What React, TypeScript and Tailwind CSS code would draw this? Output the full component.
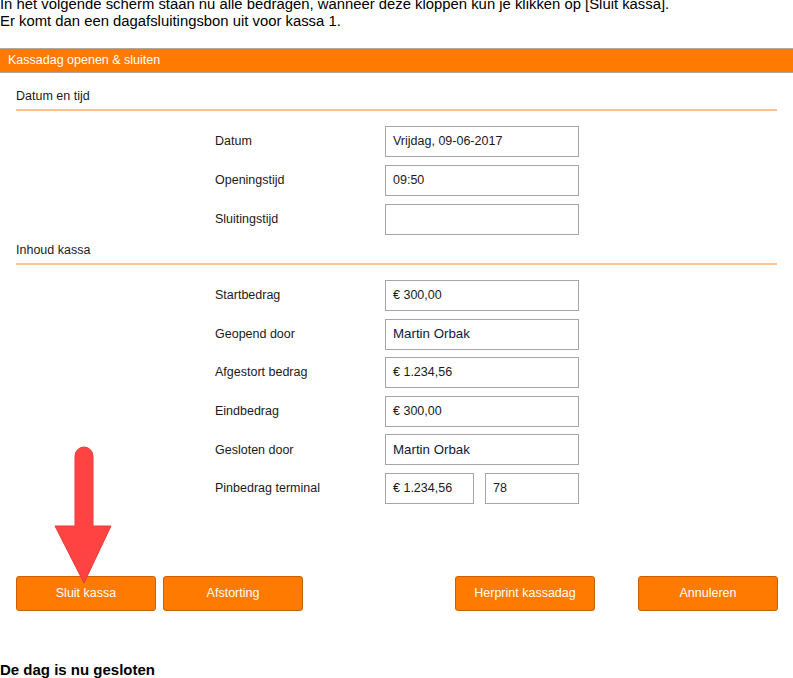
const labelRows1 = [
  { label: "Datum", value: "Vrijdag, 09-06-2017" },
  { label: "Openingstijd", value: "09:50" },
  { label: "Sluitingstijd", value: "" },
];

type Row = { label: string; value: string; name?: boolean; extra?: string };

const labelRows2: Row[] = [
  { label: "Startbedrag", value: "€ 300,00" },
  { label: "Geopend door", value: "Martin Orbak", name: true },
  { label: "Afgestort bedrag", value: "€ 1.234,56" },
  { label: "Eindbedrag", value: "€ 300,00" },
  { label: "Gesloten door", value: "Martin Orbak", name: true },
  { label: "Pinbedrag terminal", value: "€ 1.234,56", extra: "78" },
];

function Field({ value, name, className }: { value: string; name?: boolean; className: string }) {
  return (
    <div
      className={`flex h-[31px] items-center border border-[#a6a6a6] bg-white px-[7px] ${className} ${
        name ? "text-[13.3px] text-[#101a3a]" : "text-[12.5px] text-[#1a1a1a]"
      }`}
    >
      {value}
    </div>
  );
}

function FormRow({ row }: { row: Row }) {
  return (
    <div className="flex h-[31px] items-center">
      <div className="w-[170px] pl-[215px] box-content text-[12.5px] text-[#1a1a1a]">{row.label}</div>
      {row.extra !== undefined ? (
        <div className="flex gap-[11px]">
          <Field value={row.value} className="w-[89px]" />
          <Field value={row.extra} className="w-[94px]" />
        </div>
      ) : (
        <Field value={row.value} name={row.name} className="w-[194px]" />
      )}
    </div>
  );
}

function Section({ title }: { title: string }) {
  return (
    <div className="mx-4">
      <div className="text-[12.5px] leading-[15px] text-[#1a1a1a]">{title}</div>
      <div className="mt-[5px] h-[2px] bg-[#ffc38f]" />
    </div>
  );
}

function OrangeButton({ label, className }: { label: string; className?: string }) {
  return (
    <button
      className={`flex h-[35px] w-[140px] items-center justify-center rounded-[3px] border border-[#c96000] bg-[#ff7a00] text-[12.5px] text-white ${className ?? ""}`}
    >
      {label}
    </button>
  );
}

export default function App() {
  return (
    <div className="relative h-[678px] w-[793px] overflow-hidden bg-white font-['Liberation_Sans',Arial,sans-serif]">
      {/* uitleg boven */}
      <div className="mt-[-4px] text-[14.85px] leading-[17px] text-black">
        <p>In het volgende scherm staan nu alle bedragen, wanneer deze kloppen kun je klikken op [Sluit kassa].</p>
        <p>Er komt dan een dagafsluitingsbon uit voor kassa 1.</p>
      </div>

      <div className="mt-[18px] w-[793px]">
        <div className="flex h-[25px] items-center border-y border-[#b0a8a0] bg-[#ff7a00] pl-2 text-[12.5px] text-white">
          Kassadag openen &amp; sluiten
        </div>

        <div className="mt-[16px]">
          <Section title="Datum en tijd" />
          <div className="mt-[15px] flex flex-col gap-[8px]">
            {labelRows1.map((r) => (
              <FormRow key={r.label} row={r} />
            ))}
          </div>
        </div>

        <div className="mt-[8px]">
          <Section title="Inhoud kassa" />
          <div className="mt-[15px] flex flex-col gap-[7.6px]">
            {labelRows2.map((r) => (
              <FormRow key={r.label} row={r} />
            ))}
          </div>
        </div>

        <div className="mt-[72px] flex pl-4 pr-[15px]">
          <OrangeButton label="Sluit kassa" />
          <OrangeButton label="Afstorting" className="ml-[7px]" />
          <OrangeButton label="Herprint kassadag" className="ml-[152px]" />
          <OrangeButton label="Annuleren" className="ml-auto" />
        </div>
      </div>

      <p className="absolute left-0 top-[661px] text-[15px] font-bold leading-[17px] text-black">De dag is nu gesloten</p>

      {/* rode pijl */}
      <svg className="absolute left-[50px] top-[444px]" width="66" height="142" viewBox="0 0 66 142">
        <path
          d="M25 12 A9 9 0 0 1 43 12 L43 82 L61 82 L34 139 L5 82 L25 82 Z"
          fill="#ff4343"
          stroke="#e83a3a"
          strokeWidth="1"
          strokeLinejoin="round"
        />
      </svg>
    </div>
  );
}
